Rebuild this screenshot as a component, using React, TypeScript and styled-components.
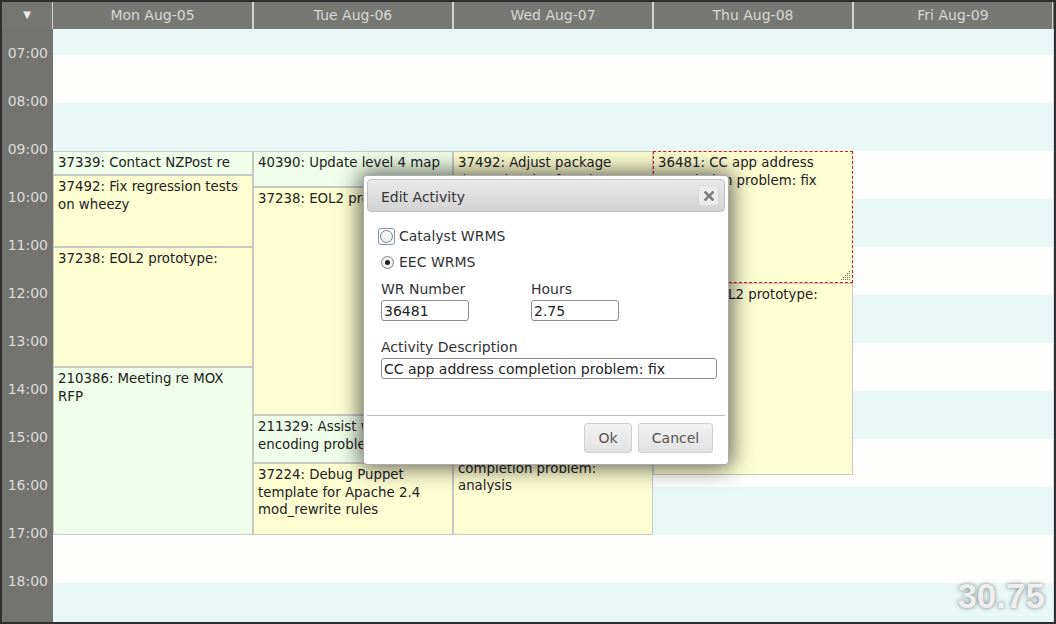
import React from "react";
import styled, { createGlobalStyle, css } from "styled-components";

const HOUR = 48;
const FIRST = 7; // first full hour line
const OFFSET = 26; // px from body top to 07:00

type Tone = "yellow" | "green";

interface Activity {
  day: number;
  start: number;
  end: number;
  text: string;
  tone: Tone;
  selected?: boolean;
}

const days = ["Mon Aug-05", "Tue Aug-06", "Wed Aug-07", "Thu Aug-08", "Fri Aug-09"];
const hours = ["07:00", "08:00", "09:00", "10:00", "11:00", "12:00", "13:00", "14:00", "15:00", "16:00", "17:00", "18:00"];

const activities: Activity[] = [
  { day: 0, start: 9, end: 9.5, text: "37339: Contact NZPost re address file", tone: "green" },
  { day: 0, start: 9.5, end: 11, text: "37492: Fix regression tests on wheezy", tone: "yellow" },
  { day: 0, start: 11, end: 13.5, text: "37238: EOL2 prototype:", tone: "yellow" },
  { day: 0, start: 13.5, end: 17, text: "210386: Meeting re MOX RFP", tone: "green" },
  { day: 1, start: 9, end: 9.75, text: "40390: Update level 4 map", tone: "green" },
  { day: 1, start: 9.75, end: 14.5, text: "37238: EOL2 prototype:", tone: "yellow" },
  { day: 1, start: 14.5, end: 15.5, text: "211329: Assist with UTF-8 encoding problem", tone: "green" },
  { day: 1, start: 15.5, end: 17, text: "37224: Debug Puppet template for Apache 2.4 mod_rewrite rules", tone: "yellow" },
  { day: 2, start: 9, end: 15, text: "37492: Adjust package dependencies for wheezy", tone: "yellow" },
  { day: 2, start: 15, end: 17, text: "36481: CC app address completion problem: analysis", tone: "yellow" },
  { day: 3, start: 9, end: 11.75, text: "36481: CC app address completion problem: fix", tone: "yellow", selected: true },
  { day: 3, start: 11.75, end: 15.75, text: "37238: EOL2 prototype:", tone: "yellow" },
];

const GlobalStyle = createGlobalStyle`
  html, body {
    margin: 0;
    padding: 0;
    background: #2f2f2f;
  }
  body {
    font-family: "DejaVu Sans", Verdana, sans-serif;
    overflow: hidden;
  }
`;

const Frame = styled.div`
  position: relative;
  margin: 2px;
  width: 1052px;
  height: 620px;
  display: grid;
  grid-template-columns: 51px 1001px;
  grid-template-rows: 27px 593px;
  overflow: hidden;
`;

const Corner = styled.div`
  background: #757572;
  color: #eeeeee;
  font-size: 10px;
  display: flex;
  justify-content: center;
  padding-top: 7px;
  box-sizing: border-box;
  border-right: 1px solid #cfcfcf;
`;

const HeaderRow = styled.div`
  display: flex;
  background: #777773;
`;

const DayHeader = styled.div`
  width: 200px;
  box-sizing: border-box;
  border-right: 1px solid #d2d2d0;
  & + & {
    border-left: 1px solid #d2d2d0;
  }
  color: #d8d8d4;
  font-size: 14px;
  line-height: 26px;
  text-align: center;
`;

const TimeColumn = styled.div`
  background: #737370;
  display: flex;
  flex-direction: column;
`;

const TimeLabel = styled.div`
  height: ${HOUR}px;
  flex-shrink: 0;
  line-height: ${HOUR}px;
  text-align: right;
  padding-right: 5px;
  color: #dcdcd8;
  font-size: 14px;
`;

const DayArea = styled.div`
  display: flex;
  border-right: 1px solid #d9d9ee;
  background-image: linear-gradient(#e9f7f7 0 48px, #fefffd 48px 96px);
  background-size: 100% 96px;
  background-position: 0 -22px;
`;

const DayColumn = styled.div`
  position: relative;
  width: 200px;
  flex-shrink: 0;
`;

const toneColours: Record<Tone, string> = {
  yellow: "#fefed3",
  green: "#effde9",
};

const Event = styled.div<{ $tone: Tone; $selected?: boolean }>`
  position: absolute;
  left: 0;
  right: 0;
  box-sizing: border-box;
  background: ${(p) => toneColours[p.$tone]};
  border: 1px solid #c8c8c4;
  padding: 2px 4px 0;
  font-size: 13.33px;
  line-height: 17.5px;
  color: #222;
  overflow: hidden;
  ${(p) =>
    p.$selected &&
    css`
      border: 1px dashed #e3101a;
    `}
`;

const Grip = styled.svg`
  position: absolute;
  right: 1px;
  bottom: 1px;
`;

const Total = styled.div`
  position: absolute;
  right: 9px;
  bottom: 9px;
  font-family: "Liberation Sans", Arial, sans-serif;
  font-weight: bold;
  font-size: 35px;
  line-height: 1;
  color: #eeeeee;
  text-shadow: 0 0 4px rgba(0, 0, 0, 0.5);
`;

/* dialog */

const Dialog = styled.div`
  position: absolute;
  left: 361px;
  top: 173px;
  width: 366px;
  height: 290px;
  box-sizing: border-box;
  background: #ffffff;
  border: 1px solid #aaaaaa;
  border-radius: 4px;
  padding: 3px;
  box-shadow: 0 0 22px 3px rgba(0, 0, 0, 0.62);
  display: flex;
  flex-direction: column;
  color: #333;
  font-size: 14px;
`;

const TitleBar = styled.div`
  height: 33px;
  box-sizing: border-box;
  border: 1px solid #c2c2c2;
  border-radius: 4px;
  background: linear-gradient(#eaeaea, #d2d2d2);
  display: flex;
  align-items: center;
  justify-content: space-between;
  padding: 2px 5px 0 13px;
`;

const CloseButton = styled.div`
  width: 21px;
  height: 21px;
  margin-top: -2px;
  box-sizing: border-box;
  border: 1px solid #d6d6d6;
  border-radius: 3px;
  background: #ececec;
  display: flex;
  align-items: center;
  justify-content: center;
`;

const DialogBody = styled.div`
  height: 203px;
  box-sizing: border-box;
  padding: 15px 10px 0 14px;
  display: flex;
  flex-direction: column;
`;

const RadioRow = styled.label`
  display: flex;
  align-items: center;
  gap: 5px;
  height: 18px;
  & + & {
    margin-top: 8px;
  }
`;

const FocusBox = styled.span`
  display: flex;
  margin: -3px -1px -3px -3px;
  padding: 1px;
  border: 1px solid #8296ac;
  border-radius: 3px;
`;

const RadioDot = styled.span<{ $checked?: boolean }>`
  width: 13px;
  height: 13px;
  box-sizing: border-box;
  border-radius: 50%;
  border: 1px solid #808080;
  background: radial-gradient(circle at 50% 35%, #ffffff, #e4e4e4);
  display: flex;
  align-items: center;
  justify-content: center;
  ${(p) =>
    p.$checked &&
    css`
      &::after {
        content: "";
        width: 5px;
        height: 5px;
        border-radius: 50%;
        background: #1e1e1e;
      }
    `}
`;

const FieldGrid = styled.div`
  display: grid;
  grid-template-columns: 150px 1fr;
  margin-top: 10px;
`;

const Field = styled.div<{ $wide?: boolean }>`
  display: flex;
  flex-direction: column;
  gap: 2px;
  ${(p) =>
    p.$wide &&
    css`
      margin-top: 18px;
    `}
`;

const Label = styled.div`
  line-height: 17px;
  color: #333;
`;

const TextBox = styled.div<{ $width: number }>`
  width: ${(p) => p.$width}px;
  height: 21px;
  box-sizing: border-box;
  border: 1px solid #8c8c8c;
  border-radius: 3px;
  padding: 0 2px;
  line-height: 20px;
  color: #222;
  background: #fff;
`;

const ButtonPane = styled.div`
  border-top: 1px solid #bcbcbc;
  display: flex;
  justify-content: flex-end;
  gap: 6px;
  padding: 7px 12px 0 0;
`;

const Button = styled.div<{ $width: number }>`
  width: ${(p) => p.$width}px;
  height: 30px;
  box-sizing: border-box;
  border: 1px solid #d0d0d0;
  border-radius: 3px;
  background: linear-gradient(#f2f2f2, #e2e2e2);
  color: #555;
  line-height: 28px;
  text-align: center;
`;

const CloseIcon = () => (
  <svg width="10" height="10" viewBox="0 0 10 10">
    <path d="M1.5 1.5 L8.5 8.5 M8.5 1.5 L1.5 8.5" stroke="#7c7c7c" strokeWidth="2.6" strokeLinecap="square" />
  </svg>
);

const ResizeGrip = () => {
  const dots: React.ReactNode[] = [];
  for (let y = 0; y < 10; y += 2) {
    for (let x = 0; x < 10; x += 2) {
      if (x + y >= 8) dots.push(<rect key={`${x}-${y}`} x={x} y={y} width="1" height="1" fill="#777" />);
    }
  }
  return (
    <Grip width="10" height="10" viewBox="0 0 10 10">
      {dots}
    </Grip>
  );
};

const top = (h: number) => OFFSET + (h - FIRST) * HOUR;

const App = () => {
  return (
    <>
      <GlobalStyle />
      <Frame>
        <Corner>▼</Corner>
        <HeaderRow>
          {days.map((d) => (
            <DayHeader key={d}>{d}</DayHeader>
          ))}
        </HeaderRow>
        <TimeColumn>
          {hours.map((h) => (
            <TimeLabel key={h}>{h}</TimeLabel>
          ))}
        </TimeColumn>
        <DayArea>
          {days.map((d, i) => (
            <DayColumn key={d}>
              {activities
                .filter((a) => a.day === i)
                .map((a) => (
                  <Event
                    key={`${a.day}-${a.start}`}
                    $tone={a.tone}
                    $selected={a.selected}
                    style={{ top: top(a.start), height: (a.end - a.start) * HOUR }}
                  >
                    {a.text}
                    {a.selected && <ResizeGrip />}
                  </Event>
                ))}
            </DayColumn>
          ))}
        </DayArea>

        <Dialog>
          <TitleBar>
            <span>Edit Activity</span>
            <CloseButton>
              <CloseIcon />
            </CloseButton>
          </TitleBar>
          <DialogBody>
            <RadioRow>
              <FocusBox>
                <RadioDot />
              </FocusBox>
              Catalyst WRMS
            </RadioRow>
            <RadioRow>
              <RadioDot $checked />
              EEC WRMS
            </RadioRow>
            <FieldGrid>
              <Field>
                <Label>WR Number</Label>
                <TextBox $width={88}>36481</TextBox>
              </Field>
              <Field>
                <Label>Hours</Label>
                <TextBox $width={88}>2.75</TextBox>
              </Field>
            </FieldGrid>
            <Field $wide>
              <Label>Activity Description</Label>
              <TextBox $width={336}>CC app address completion problem: fix</TextBox>
            </Field>
          </DialogBody>
          <ButtonPane>
            <Button $width={48}>Ok</Button>
            <Button $width={75}>Cancel</Button>
          </ButtonPane>
        </Dialog>

        <Total>30.75</Total>
      </Frame>
    </>
  );
};

export default App;
